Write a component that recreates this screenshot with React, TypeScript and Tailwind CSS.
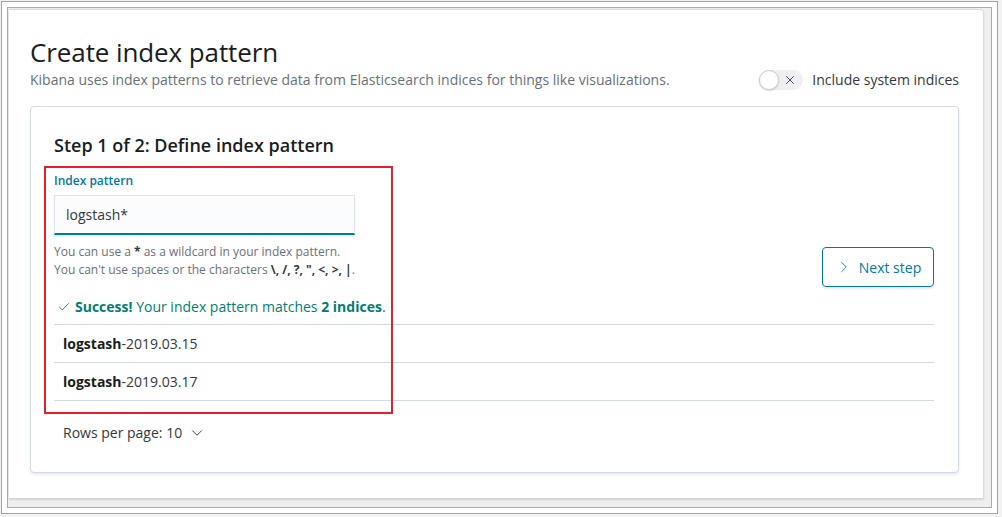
import { Check, ChevronDown, ChevronRight, X } from 'lucide-react'

const rows = ['2019.03.15', '2019.03.17']

export default function App() {
  return (
    <div
      className="w-[1002px] h-[517px] bg-[#f2f2f2] pl-px pt-px overflow-hidden"
      style={{ fontFamily: '"Open Sans", "Noto Sans", sans-serif' }}
    >
      <div className="w-[997px] h-[513px] border border-[#a3a3a3] bg-white p-[5px] flex">
        <div className="flex-1 border border-[#ababab] bg-[#efefef] pl-px pt-px pr-[7px] pb-[9px] flex">
          <div className="flex-1 bg-white border-t border-r border-[#dcdcdc] rounded-tr-[4px] shadow-[0_2px_2px_rgba(0,0,0,0.12)] pl-[21px] pr-[24px] pt-[26px]">
            <h1 className="text-[26px] leading-[32px] text-[#1a1c21] tracking-[-0.1px]">Create index pattern</h1>
            <div className="flex items-center justify-between mt-[2px]">
              <p className="text-[14px] leading-[20px] text-[#69707d]">
                Kibana uses index patterns to retrieve data from Elasticsearch indices for things like visualizations.
              </p>
              <div className="flex items-center gap-[9px]">
                <div className="relative w-[44px] h-[20px] rounded-full bg-[#eef0f3]">
                  <div className="absolute left-0 top-0 w-[20px] h-[20px] rounded-full bg-white border border-[#c9cdd3] shadow-[0_1px_2px_rgba(0,0,0,0.15)]" />
                  <X className="absolute left-[24px] top-[3px] w-[14px] h-[14px] text-[#343741]" strokeWidth={1.5} />
                </div>
                <span className="text-[14px] leading-[20px] text-[#343741]">Include system indices</span>
              </div>
            </div>
            <div className="mt-[16px] border border-[#d3dae6] rounded-[4px] shadow-[0_2px_3px_rgba(0,0,0,0.08)] bg-white h-[367px] pl-[23px] pr-[24px] pt-[26px]">
              <h2 className="text-[18px] leading-[24px] font-semibold text-[#1a1c21]">Step 1 of 2: Define index pattern</h2>
              <div className="relative mt-[10px]">
                <div className="absolute left-[-10px] top-[-1px] w-[349px] h-[248px] border-2 border-[#e4202a] pointer-events-none" />
                <div className="flex items-start justify-between pt-[6px]">
                  <div>
                    <div className="text-[12px] leading-[16px] font-semibold text-[#0079a5]">Index pattern</div>
                    <div className="mt-[6px] w-[301px] h-[40px] bg-[#fbfcfd] border border-[#e0e4ea] border-b-2 border-b-[#0079a5] shadow-[0_2px_2px_rgba(0,0,0,0.08)] px-[11px] flex items-center">
                      <span className="text-[14px] text-[#343741]">logstash*</span>
                    </div>
                    <div className="mt-[8px] text-[12px] leading-[18px] text-[#69707d]">
                      <div>
                        You can use a <b className="text-[#343741]">*</b> as a wildcard in your index pattern.
                      </div>
                      <div>
                        You can't use spaces or the characters <b className="text-[#343741]">\, /, ?, ", &lt;, &gt;, |</b>.
                      </div>
                    </div>
                  </div>
                  <button className="mt-[74px] w-[112px] h-[40px] border border-[#0079a5] rounded-[4px] text-[#0079a5] text-[14px] flex items-center justify-center gap-[6px] shadow-[0_2px_2px_rgba(0,0,0,0.08)]">
                    <ChevronRight className="w-[18px] h-[18px]" strokeWidth={1.2} />
                    Next step
                  </button>
                </div>
                <div className="mt-[10px] flex items-center gap-[4px] text-[14px] leading-[20px] text-[#017d73] pl-[3px]">
                  <Check className="w-[14px] h-[14px]" strokeWidth={1.5} />
                  <span>
                    <b>Success!</b> Your index pattern matches <b>2 indices</b>.
                  </span>
                </div>
                <div className="mt-[7px] border-t border-[#d3dae6]">
                  {rows.map((r) => (
                    <div key={r} className="h-[38px] border-b border-[#d3dae6] flex items-center pl-[9px] text-[14px] text-[#343741]">
                      <b className="text-[#1a1c21]">logstash</b>-{r}
                    </div>
                  ))}
                </div>
                <div className="mt-[22px] pl-[9px] flex items-center gap-[6px] text-[14px] leading-[20px] text-[#343741]">
                  Rows per page: 10
                  <ChevronDown className="w-[18px] h-[18px]" strokeWidth={1.2} />
                </div>
              </div>
            </div>
          </div>
        </div>
      </div>
    </div>
  )
}
